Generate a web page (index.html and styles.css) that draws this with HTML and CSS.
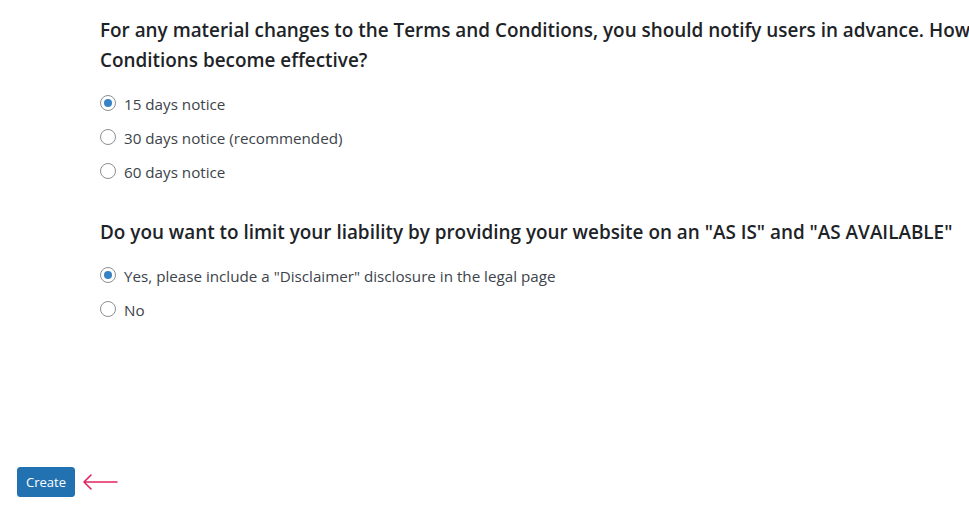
FILE: index.html
```html
<!DOCTYPE html>
<html lang="en">
	<head>
		<meta charset="UTF-8" />
		<meta name="viewport" content="width=device-width, initial-scale=1.0" />
		<title>Legal Page Wizard</title>

		<link rel="stylesheet" href="styles.css">
	</head>

	<body>
		<div class="wizard">
			<div class="question">
				<h2 class="question__title">For any material changes to the Terms and Conditions, you should notify users in advance. How<br />Conditions become effective?</h2>
				<div class="question__options">
					<label class="option"><input type="radio" name="notice" checked /><span>15 days notice</span></label>
					<label class="option"><input type="radio" name="notice" /><span>30 days notice (recommended)</span></label>
					<label class="option"><input type="radio" name="notice" /><span>60 days notice</span></label>
				</div>
			</div>

			<div class="question">
				<h2 class="question__title">Do you want to limit your liability by providing your website on an "AS IS" and "AS AVAILABLE"</h2>
				<div class="question__options">
					<label class="option"><input type="radio" name="disclaimer" checked /><span>Yes, please include a "Disclaimer" disclosure in the legal page</span></label>
					<label class="option"><input type="radio" name="disclaimer" /><span>No</span></label>
				</div>
			</div>
		</div>

		<div class="actions">
			<button class="button-primary" type="button">Create</button>
			<svg class="pointer" width="36" height="16" viewBox="0 0 36 16">
				<path d="M2 8 H35 M9 1 L2 8 L9 15" fill="none" stroke="#e2245f" stroke-width="1.6" stroke-linecap="round" stroke-linejoin="round" />
			</svg>
		</div>
	</body>
</html>
```

FILE: styles.css
```css
* {
	margin: 0;
	box-sizing: border-box;
}

body {
	background: #fff;
	font-family: "Open Sans", "Noto Sans", sans-serif;
	color: #3c434a;
	overflow: hidden;
}

.wizard {
	padding: 15px 0 0 100px;
	display: flex;
	flex-direction: column;
	gap: 29px;
}

.question__title {
	font-size: 18.9px;
	font-weight: 600;
	line-height: 30px;
	color: #1d2327;
	white-space: nowrap;
}

.question__options {
	margin-top: 11px;
	display: flex;
	flex-direction: column;
}

.option {
	height: 34px;
	display: flex;
	align-items: center;
	gap: 8px;
	font-size: 15.2px;
	color: #3c434a;
}

.option span {
	padding-top: 2px;
}

.option input {
	appearance: none;
	width: 16px;
	height: 16px;
	margin: 0;
	border: 1px solid #8c8f94;
	border-radius: 50%;
	background: #fff;
	display: flex;
	align-items: center;
	justify-content: center;
}

.option input:checked::before {
	content: "";
	width: 8px;
	height: 8px;
	border-radius: 50%;
	background: #3582c4;
}

.actions {
	margin-top: 141px;
	padding-left: 17px;
	display: flex;
	align-items: center;
	gap: 7px;
}

.button-primary {
	height: 30px;
	padding: 0 8px;
	border: 1px solid #2271b1;
	border-radius: 3px;
	background: #2271b1;
	color: #fff;
	font-family: "Open Sans", "Noto Sans", sans-serif;
	font-size: 13px;
}
```
